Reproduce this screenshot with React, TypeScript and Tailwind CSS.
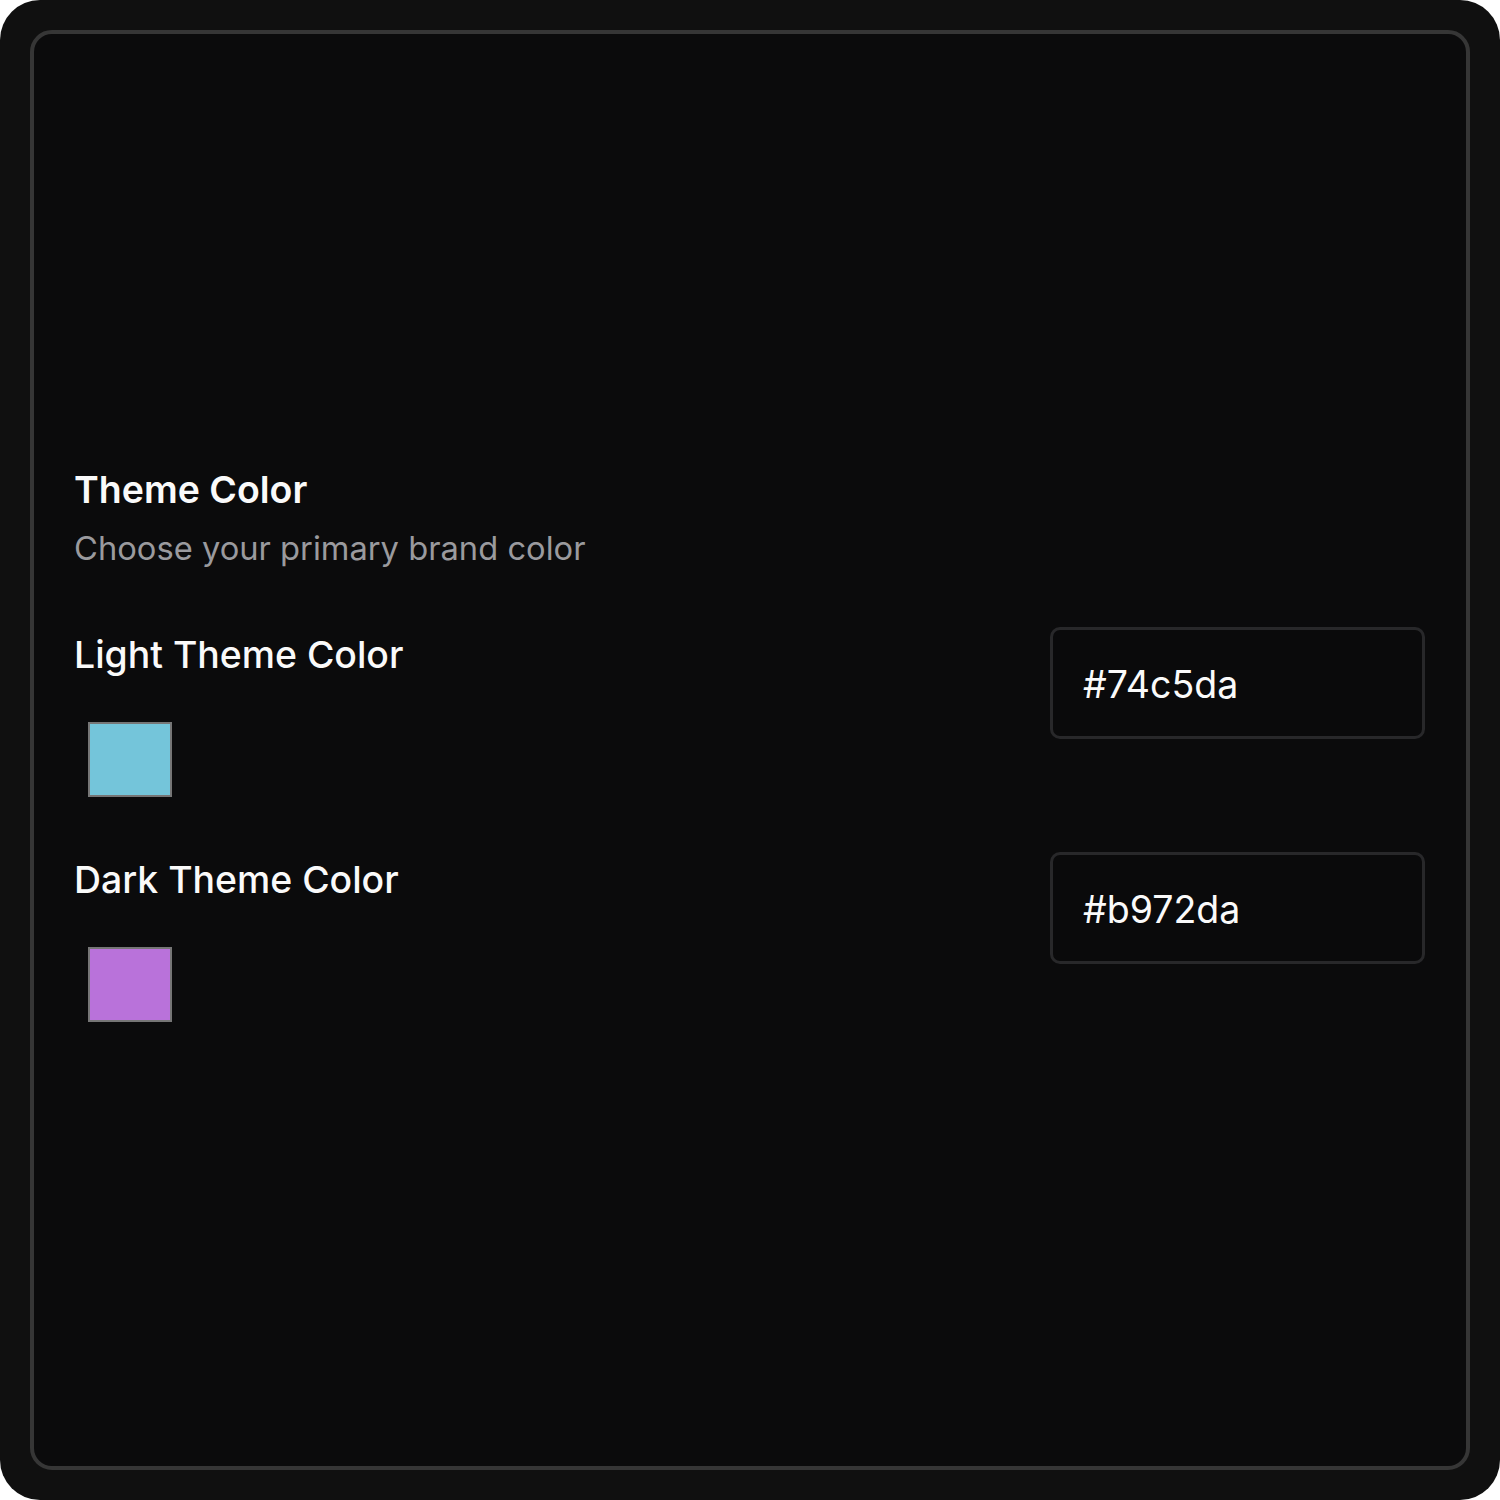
export default function App() {
  const rows = [
    { label: "Light Theme Color", value: "#74c5da", swatch: "bg-[#74c5da]" },
    { label: "Dark Theme Color", value: "#b972da", swatch: "bg-[#b972da]" },
  ];

  return (
    <div className="w-[1500px] h-[1500px] bg-white font-['Inter',sans-serif]">
      <div className="w-full h-full rounded-[40px] bg-[#101010] p-[30px]">
        <div className="w-full h-full rounded-[22px] border-4 border-[#363636] bg-[#0b0b0c] flex flex-col justify-center pl-[40px] pr-[41px] pb-4">
          {/* header */}
          <div>
            <h2 className="text-[37.5px] leading-[54px] font-semibold text-[#fafafa]">Theme Color</h2>
            <p className="mt-[7px] text-[32.7px] leading-[48px] text-[#9a9a9e]">Choose your primary brand color</p>
          </div>

          {/* colour rows */}
          <div className="mt-14 space-y-14">
            {rows.map((r) => (
              <div key={r.label} className="flex items-start justify-between">
                <div>
                  <div className="text-[37.4px] leading-[54px] font-medium text-[#fafafa]">{r.label}</div>
                  <div className={`ml-[14px] mt-10 w-[84px] h-[75px] border-2 border-[#767676] ${r.swatch}`} />
                </div>
                <div className="w-[375px] h-[112px] -mt-px rounded-[10px] border-[3px] border-[#28282a] bg-[#0a0a0b] flex items-center pl-[30px] pr-[29px] pt-[5px]">
                  <span className="text-[37.5px] text-[#fafafa]">{r.value}</span>
                </div>
              </div>
            ))}
          </div>
        </div>
      </div>
    </div>
  );
}
